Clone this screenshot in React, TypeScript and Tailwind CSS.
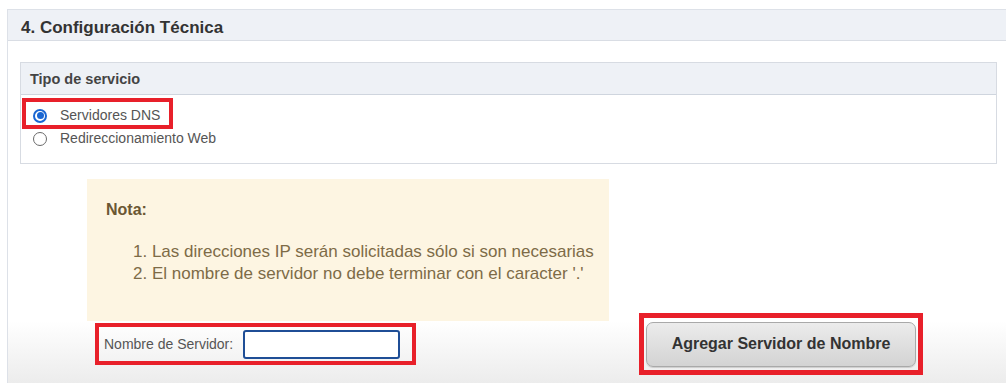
import React from "react";

function Radio({ checked, label }: { checked?: boolean; label: string }) {
  return (
    <div className="flex h-[23px] items-center">
      <span
        className={
          checked
            ? "ml-[12px] flex h-[14px] w-[14px] items-center justify-center rounded-full border-2 border-[#1a66d2] bg-white"
            : "ml-[12px] flex h-[14px] w-[14px] items-center justify-center rounded-full border-[1.5px] border-[#6a6a6a] bg-white"
        }
      >
        {checked && <span className="h-[7px] w-[7px] rounded-full bg-[#1a66d2]" />}
      </span>
      <span className="ml-[13px] text-[14px] text-[#555]">{label}</span>
    </div>
  );
}

export default function App() {
  return (
    <div
      className="flex h-[383px] w-[1006px] flex-col overflow-hidden bg-white pt-[9px] pl-[7px]"
      style={{ fontFamily: '"Liberation Sans", Arial, sans-serif' }}
    >
      <div className="flex flex-1 flex-col border-t border-l border-[#dde1e8]">
        {/* Section header */}
        <div className="h-[31px] border-b border-[#d9dde4] bg-[#eef1f6] pt-[8px] pl-[13px]">
          <h2 className="text-[17px] leading-[20px] font-bold text-[#333]">4. Configuración Técnica</h2>
        </div>

        {/* Tipo de servicio */}
        <div className="mt-[21px] mr-[9px] ml-[12px] border border-[#d7dbe2]">
          <div className="h-[32px] border-b border-[#cfd5de] bg-[#eef1f6] pt-[4px] pl-[9px]">
            <span className="text-[14.5px] leading-[17px] font-bold text-[#444]">Tipo de servicio</span>
          </div>
          <div className="relative h-[68px] pt-[9px]">
            <Radio checked label="Servidores DNS" />
            <Radio label="Redireccionamiento Web" />
            <div className="pointer-events-none absolute top-[3px] left-[1px] h-[31px] w-[151px] border-4 border-[#e8202a]" />
          </div>
        </div>

        {/* Nota */}
        <div className="mt-[15px] ml-[79px] h-[142px] w-[522px] bg-[#fdf5e2] pt-[21px] pl-[19px]">
          <p className="text-[16px] leading-[20px] font-bold text-[#6b5733]">Nota:</p>
          <ol className="mt-[21px] pl-[27px] text-[17px] leading-[22px] text-[#7d6b47]">
            <li>1. Las direcciones IP serán solicitadas sólo si son necesarias</li>
            <li>2. El nombre de servidor no debe terminar con el caracter '.'</li>
          </ol>
        </div>

        {/* Bottom row */}
        <div className="flex flex-1 items-start bg-gradient-to-b from-white to-[#ececec]">
          <div className="mt-[2px] ml-[87px] flex h-[42px] w-[321px] items-center border-4 border-[#e8202a] pl-[5px]">
            <span className="text-[14px] text-[#555]">Nombre de Servidor:</span>
            <input
              type="text"
              className="ml-[10px] h-[29px] w-[157px] rounded-[3px] border-2 border-[#1f4e96] bg-white outline-none"
            />
          </div>
          <div className="mt-[-8px] ml-[223px] flex h-[62px] w-[284px] items-center justify-center border-[5px] border-[#e8202a]">
            <button className="h-[45px] w-[270px] rounded-[7px] border border-[#a9a9a9] bg-gradient-to-b from-[#ececec] to-[#d3d3d3] text-[16px] font-bold text-[#333] shadow-[0_1px_1px_rgba(0,0,0,0.15)]">
              Agregar Servidor de Nombre
            </button>
          </div>
        </div>
      </div>
    </div>
  );
}
